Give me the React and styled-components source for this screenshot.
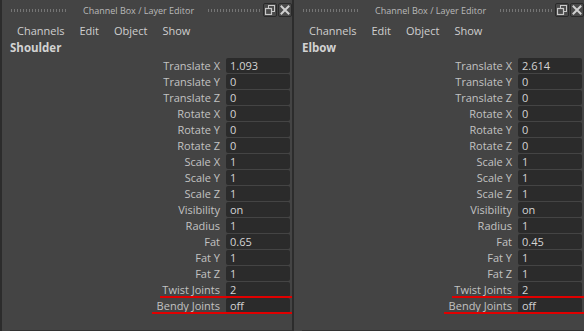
import React from "react";
import styled, { createGlobalStyle } from "styled-components";

const Global = createGlobalStyle`
  html, body { margin: 0; padding: 0; background: #444444; overflow: hidden; }
  body { font-family: "Open Sans", "Liberation Sans", sans-serif; }
`;

const Screen = styled.div`
  display: flex;
  width: 584px;
  height: 331px;
  background: #444444;
`;

const Panel = styled.div`
  width: 290px;
  height: 331px;
  border-left: 2px solid #2c2c2c;
  display: flex;
  flex-direction: column;
  position: relative;
`;

const TitleBar = styled.div`
  height: 20px;
  display: flex;
  align-items: center;
  padding-left: 8px;
`;

const Grip = styled.div`
  width: ${(p) => p.$w}px;
  height: 3px;
  background-image: radial-gradient(circle, #7a7a7a 0.6px, transparent 0.7px);
  background-size: 3px 2px;
  opacity: 0.9;
`;

const Title = styled.div`
  width: 104px;
  font-size: 9px;
  color: #b9b9b9;
  margin: 0 ${(p) => p.$gapR}px 0 ${(p) => p.$gapL}px;
  white-space: nowrap;
  text-align: center;
`;

const WinButton = styled.div`
  width: 12px;
  height: 12px;
  border: 1px solid #2a2a2a;
  border-radius: 2px;
  background: #4a4a4a;
  display: flex;
  align-items: center;
  justify-content: center;
  margin-left: ${(p) => p.$ml}px;
`;

const MenuBar = styled.div`
  height: 20px;
  display: flex;
  align-items: center;
  padding-left: 15px;
  gap: 15px;
  font-size: 11px;
  color: #cfcfcf;
`;

const ObjectName = styled.div`
  height: 18px;
  line-height: 16px;
  padding-left: 8px;
  font-size: 11.5px;
  font-weight: 700;
  color: #d2d2d2;
`;

const Rows = styled.div`
  display: flex;
  flex-direction: column;
`;

const Row = styled.div`
  display: grid;
  grid-template-columns: 1fr 64px;
  column-gap: 6px;
  height: 16px;
  padding-right: 2px;
  position: relative;
  &::after {
    content: "";
    display: ${(p) => (p.$mark ? "block" : "none")};
    position: absolute;
    left: ${(p) => p.$mark || 0}px;
    right: 0;
    bottom: 0;
    height: 2px;
    background: #e00000;
  }
`;

const Label = styled.div`
  text-align: right;
  font-size: 11px;
  line-height: 16px;
  color: #c2c2c2;
  white-space: nowrap;
`;

const Field = styled.div`
  height: 15px;
  background: #2b2b2b;
  border-radius: 2px;
  font-size: 11px;
  line-height: 15px;
  padding-left: 4px;
  color: #d4d4d4;
`;

const Footer = styled.div`
  margin-top: auto;
  margin-left: 8px;
  height: 1px;
  background: #333333;
`;

const attrs = [
  "Translate X",
  "Translate Y",
  "Translate Z",
  "Rotate X",
  "Rotate Y",
  "Rotate Z",
  "Scale X",
  "Scale Y",
  "Scale Z",
  "Visibility",
  "Radius",
  "Fat",
  "Fat Y",
  "Fat Z",
  "Twist Joints",
  "Bendy Joints",
];

const marks = { "Twist Joints": 158, "Bendy Joints": 150 };

const FloatIcon = () => (
  <svg width="10" height="10" viewBox="0 0 10 10">
    <rect x="3.5" y="0.5" width="6" height="6" fill="none" stroke="#c8c8c8" strokeWidth="1" />
    <rect x="0.5" y="3.5" width="6" height="6" fill="#4a4a4a" stroke="#c8c8c8" strokeWidth="1.2" />
  </svg>
);

const CloseIcon = () => (
  <svg width="10" height="10" viewBox="0 0 10 10">
    <path d="M1.5 1.5 L8.5 8.5 M8.5 1.5 L1.5 8.5" stroke="#d0d0d0" strokeWidth="2" strokeLinecap="square" />
  </svg>
);

function ChannelBox({ name, values }) {
  return (
    <Panel>
      <TitleBar>
        <Grip $w={56} />
        <Title $gapL={17} $gapR={20}>Channel Box / Layer Editor</Title>
        <Grip $w={53} />
        <WinButton $ml={3}><FloatIcon /></WinButton>
        <WinButton $ml={1}><CloseIcon /></WinButton>
      </TitleBar>
      <MenuBar>
        <span>Channels</span>
        <span>Edit</span>
        <span>Object</span>
        <span>Show</span>
      </MenuBar>
      <ObjectName>{name}</ObjectName>
      <Rows>
        {attrs.map((a, i) => (
          <Row key={a} $mark={marks[a]}>
            <Label>{a}</Label>
            <Field>{values[i]}</Field>
          </Row>
        ))}
      </Rows>
      <Footer />
    </Panel>
  );
}

export default function App() {
  return (
    <>
      <Global />
      <Screen>
        <ChannelBox
          name="Shoulder"
          values={["1.093", "0", "0", "0", "0", "0", "1", "1", "1", "on", "1", "0.65", "1", "1", "2", "off"]}
        />
        <ChannelBox
          name="Elbow"
          values={["2.614", "0", "0", "0", "0", "0", "1", "1", "1", "on", "1", "0.45", "1", "1", "2", "off"]}
        />
      </Screen>
    </>
  );
}
